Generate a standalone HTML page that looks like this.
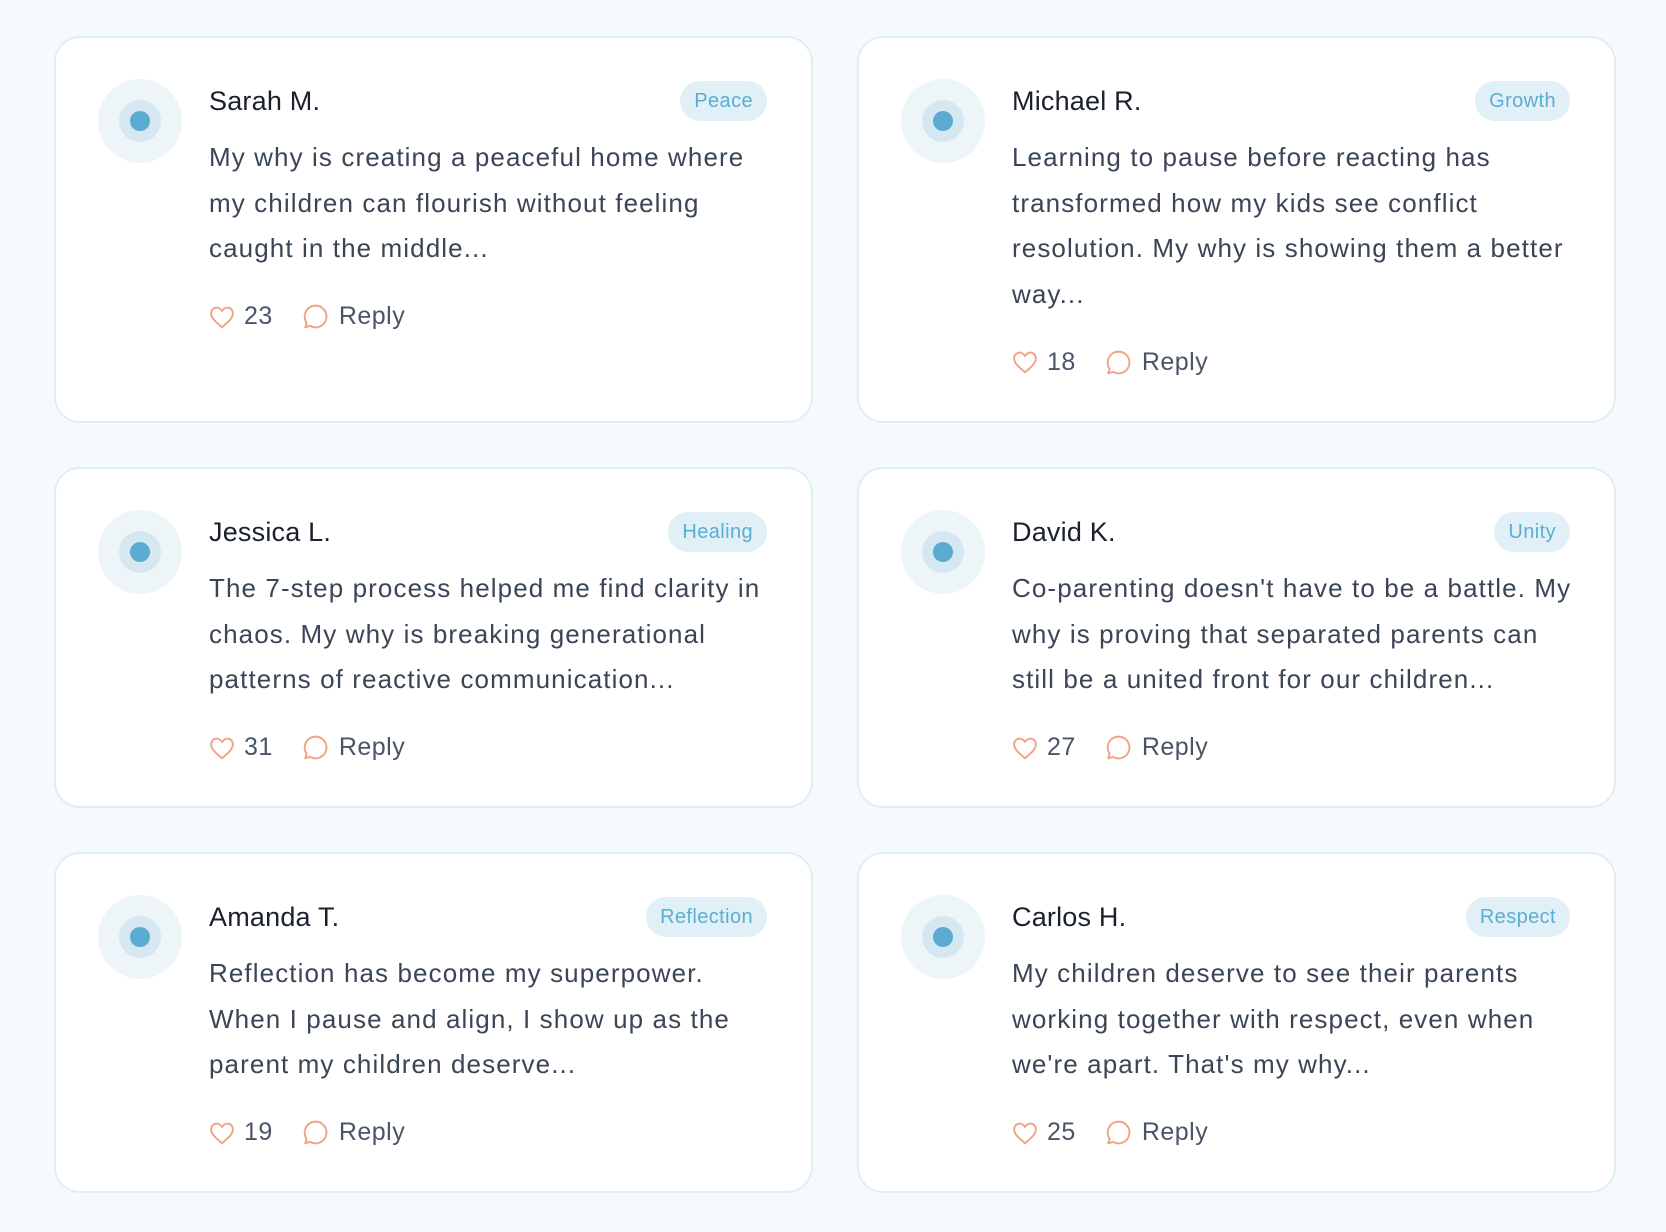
<!DOCTYPE html>
<html><head><meta charset="utf-8"><style>
*{box-sizing:border-box;margin:0;padding:0}
body{width:1666px;height:1232px;background:#f6fafd;font-family:"Liberation Sans",sans-serif;position:relative;overflow:hidden}
.card{position:absolute;width:759px;background:#fff;border:2px solid #e2eef5;border-radius:26px;padding:43px 44px 0 42px}
.av{position:absolute;left:42px;top:41px;width:84px;height:84px;border-radius:50%;background:#eef5f9}
.av:before{content:"";position:absolute;left:21px;top:21px;width:42px;height:42px;border-radius:50%;background:#d5e8f2}
.av:after{content:"";position:absolute;left:32px;top:32px;width:20px;height:20px;border-radius:50%;background:#5aaad2}
.c{margin-left:111px}
.hd{display:flex;justify-content:space-between;align-items:center;height:40px;margin-bottom:14px}
.nm{font-size:27px;color:#1a202c;letter-spacing:0.2px}
.tag{background:#e1eff6;color:#5aaed2;font-size:20px;height:40px;line-height:40px;padding:0 14px;border-radius:20px;letter-spacing:0.4px}
.tx{font-size:26px;line-height:45.5px;color:#3a4556;letter-spacing:1.1px;white-space:nowrap}
.ft{display:flex;align-items:center;margin-top:25px;font-size:25px;color:#4a5568;height:40px;letter-spacing:0.5px}
.ft svg{margin-right:9px}
.gap{width:28px}
</style></head><body>

<div class="card" style="left:54px;top:36px;height:387px"><div class="av"></div><div class="c">
<div class="hd"><span class="nm">Sarah M.</span><span class="tag">Peace</span></div>
<div class="tx">My why is creating a peaceful home where<br>my children can flourish without feeling<br>caught in the middle...</div>
<div class="ft"><svg width="26" height="24" viewBox="0 0 24 22"><path d="M12 20.5C6 15.5 2 12 2 7.5 2 4.5 4.3 2.3 7 2.3c2 0 3.5 1.2 5 3 1.5-1.8 3-3 5-3 2.7 0 5 2.2 5 5.2 0 4.5-4 8-10 13z" fill="none" stroke="#f2a287" stroke-width="1.8"/></svg>23<span class="gap"></span><svg width="29" height="29" viewBox="0 0 24 24"><path d="M12 3a9 9 0 1 1-4.6 16.7L3.5 21l1.2-3.8A9 9 0 0 1 12 3z" fill="none" stroke="#f2a287" stroke-width="1.6" stroke-linejoin="round"/></svg>Reply</div>
</div></div>

<div class="card" style="left:857px;top:36px;height:387px"><div class="av"></div><div class="c">
<div class="hd"><span class="nm">Michael R.</span><span class="tag">Growth</span></div>
<div class="tx">Learning to pause before reacting has<br>transformed how my kids see conflict<br>resolution. My why is showing them a better<br>way...</div>
<div class="ft"><svg width="26" height="24" viewBox="0 0 24 22"><path d="M12 20.5C6 15.5 2 12 2 7.5 2 4.5 4.3 2.3 7 2.3c2 0 3.5 1.2 5 3 1.5-1.8 3-3 5-3 2.7 0 5 2.2 5 5.2 0 4.5-4 8-10 13z" fill="none" stroke="#f2a287" stroke-width="1.8"/></svg>18<span class="gap"></span><svg width="29" height="29" viewBox="0 0 24 24"><path d="M12 3a9 9 0 1 1-4.6 16.7L3.5 21l1.2-3.8A9 9 0 0 1 12 3z" fill="none" stroke="#f2a287" stroke-width="1.6" stroke-linejoin="round"/></svg>Reply</div>
</div></div>

<div class="card" style="left:54px;top:467px;height:341px"><div class="av"></div><div class="c">
<div class="hd"><span class="nm">Jessica L.</span><span class="tag">Healing</span></div>
<div class="tx">The 7-step process helped me find clarity in<br>chaos. My why is breaking generational<br>patterns of reactive communication...</div>
<div class="ft"><svg width="26" height="24" viewBox="0 0 24 22"><path d="M12 20.5C6 15.5 2 12 2 7.5 2 4.5 4.3 2.3 7 2.3c2 0 3.5 1.2 5 3 1.5-1.8 3-3 5-3 2.7 0 5 2.2 5 5.2 0 4.5-4 8-10 13z" fill="none" stroke="#f2a287" stroke-width="1.8"/></svg>31<span class="gap"></span><svg width="29" height="29" viewBox="0 0 24 24"><path d="M12 3a9 9 0 1 1-4.6 16.7L3.5 21l1.2-3.8A9 9 0 0 1 12 3z" fill="none" stroke="#f2a287" stroke-width="1.6" stroke-linejoin="round"/></svg>Reply</div>
</div></div>

<div class="card" style="left:857px;top:467px;height:341px"><div class="av"></div><div class="c">
<div class="hd"><span class="nm">David K.</span><span class="tag">Unity</span></div>
<div class="tx">Co-parenting doesn't have to be a battle. My<br>why is proving that separated parents can<br>still be a united front for our children...</div>
<div class="ft"><svg width="26" height="24" viewBox="0 0 24 22"><path d="M12 20.5C6 15.5 2 12 2 7.5 2 4.5 4.3 2.3 7 2.3c2 0 3.5 1.2 5 3 1.5-1.8 3-3 5-3 2.7 0 5 2.2 5 5.2 0 4.5-4 8-10 13z" fill="none" stroke="#f2a287" stroke-width="1.8"/></svg>27<span class="gap"></span><svg width="29" height="29" viewBox="0 0 24 24"><path d="M12 3a9 9 0 1 1-4.6 16.7L3.5 21l1.2-3.8A9 9 0 0 1 12 3z" fill="none" stroke="#f2a287" stroke-width="1.6" stroke-linejoin="round"/></svg>Reply</div>
</div></div>

<div class="card" style="left:54px;top:852px;height:341px"><div class="av"></div><div class="c">
<div class="hd"><span class="nm">Amanda T.</span><span class="tag">Reflection</span></div>
<div class="tx">Reflection has become my superpower.<br>When I pause and align, I show up as the<br>parent my children deserve...</div>
<div class="ft"><svg width="26" height="24" viewBox="0 0 24 22"><path d="M12 20.5C6 15.5 2 12 2 7.5 2 4.5 4.3 2.3 7 2.3c2 0 3.5 1.2 5 3 1.5-1.8 3-3 5-3 2.7 0 5 2.2 5 5.2 0 4.5-4 8-10 13z" fill="none" stroke="#f2a287" stroke-width="1.8"/></svg>19<span class="gap"></span><svg width="29" height="29" viewBox="0 0 24 24"><path d="M12 3a9 9 0 1 1-4.6 16.7L3.5 21l1.2-3.8A9 9 0 0 1 12 3z" fill="none" stroke="#f2a287" stroke-width="1.6" stroke-linejoin="round"/></svg>Reply</div>
</div></div>

<div class="card" style="left:857px;top:852px;height:341px"><div class="av"></div><div class="c">
<div class="hd"><span class="nm">Carlos H.</span><span class="tag">Respect</span></div>
<div class="tx">My children deserve to see their parents<br>working together with respect, even when<br>we're apart. That's my why...</div>
<div class="ft"><svg width="26" height="24" viewBox="0 0 24 22"><path d="M12 20.5C6 15.5 2 12 2 7.5 2 4.5 4.3 2.3 7 2.3c2 0 3.5 1.2 5 3 1.5-1.8 3-3 5-3 2.7 0 5 2.2 5 5.2 0 4.5-4 8-10 13z" fill="none" stroke="#f2a287" stroke-width="1.8"/></svg>25<span class="gap"></span><svg width="29" height="29" viewBox="0 0 24 24"><path d="M12 3a9 9 0 1 1-4.6 16.7L3.5 21l1.2-3.8A9 9 0 0 1 12 3z" fill="none" stroke="#f2a287" stroke-width="1.6" stroke-linejoin="round"/></svg>Reply</div>
</div></div>

</body></html>
